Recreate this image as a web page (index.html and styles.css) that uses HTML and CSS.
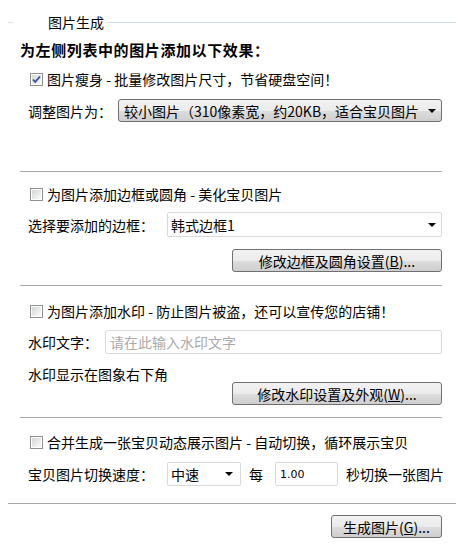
FILE: index.html
```html
<!DOCTYPE html>
<html lang="zh-CN">
<head>
<meta charset="utf-8">
<title>图片生成</title>
<link rel="stylesheet" href="styles.css">
</head>
<body>
<div class="panel">
  <div class="legend">
    <span class="lg-left"></span>
    <span class="lg-title">图片生成</span>
    <span class="lg-line"></span>
  </div>
  <div class="content">
    <div class="heading">为左侧列表中的图片添加以下效果：</div>

    <div class="check-row cr1">
      <span class="cb"><svg width="13" height="13" viewBox="0 0 13 13"><defs><linearGradient id="g1" x1="0" y1="0" x2="1" y2="1"><stop offset="0" stop-color="#d4d6d9"/><stop offset="1" stop-color="#fbfbfb"/></linearGradient></defs><rect x="0.5" y="0.5" width="12" height="12" fill="#fff" stroke="#8e8f8f"/><rect x="2" y="2" width="9" height="9" fill="url(#g1)"/><path d="M3 6.5 L5.2 9 L10 3.5" fill="none" stroke="#2c4c9c" stroke-width="1.8"/></svg></span>
      <span class="cb-text">图片瘦身 - 批量修改图片尺寸，节省硬盘空间！</span>
    </div>

    <div class="field-row fr-size">
      <span class="label lw-size">调整图片为：</span>
      <div class="select raised sel-size"><span class="sel-text">较小图片（310像素宽，约20KB，适合宝贝图片</span><span class="arrow"></span></div>
    </div>

    <div class="sep sep1"></div>

    <div class="check-row cr2">
      <span class="cb"><svg width="13" height="13" viewBox="0 0 13 13"><defs><linearGradient id="g2" x1="0" y1="0" x2="1" y2="1"><stop offset="0" stop-color="#d4d6d9"/><stop offset="1" stop-color="#fbfbfb"/></linearGradient></defs><rect x="0.5" y="0.5" width="12" height="12" fill="#fff" stroke="#8e8f8f"/><rect x="2" y="2" width="9" height="9" fill="url(#g2)"/></svg></span>
      <span class="cb-text">为图片添加边框或圆角 - 美化宝贝图片</span>
    </div>

    <div class="field-row fr-border">
      <span class="label lw-border">选择要添加的边框：</span>
      <div class="select flat sel-border"><span class="sel-text">韩式边框1</span><span class="arrow"></span></div>
    </div>

    <div class="btn-row br1">
      <div class="btn btn-wide">修改边框及圆角设置(<u>B</u>)...</div>
    </div>

    <div class="sep sep2"></div>

    <div class="check-row cr3">
      <span class="cb"><svg width="13" height="13" viewBox="0 0 13 13"><defs><linearGradient id="g3" x1="0" y1="0" x2="1" y2="1"><stop offset="0" stop-color="#d4d6d9"/><stop offset="1" stop-color="#fbfbfb"/></linearGradient></defs><rect x="0.5" y="0.5" width="12" height="12" fill="#fff" stroke="#8e8f8f"/><rect x="2" y="2" width="9" height="9" fill="url(#g3)"/></svg></span>
      <span class="cb-text">为图片添加水印 - 防止图片被盗，还可以宣传您的店铺！</span>
    </div>

    <div class="field-row fr-wm">
      <span class="label lw-wm">水印文字：</span>
      <div class="input input-wm"><span class="placeholder">请在此输入水印文字</span></div>
    </div>

    <div class="note">水印显示在图象右下角</div>

    <div class="btn-row br2">
      <div class="btn btn-wide">修改水印设置及外观(<u>W</u>)...</div>
    </div>

    <div class="sep sep3"></div>

    <div class="check-row cr4">
      <span class="cb"><svg width="13" height="13" viewBox="0 0 13 13"><defs><linearGradient id="g4" x1="0" y1="0" x2="1" y2="1"><stop offset="0" stop-color="#d4d6d9"/><stop offset="1" stop-color="#fbfbfb"/></linearGradient></defs><rect x="0.5" y="0.5" width="12" height="12" fill="#fff" stroke="#8e8f8f"/><rect x="2" y="2" width="9" height="9" fill="url(#g4)"/></svg></span>
      <span class="cb-text">合并生成一张宝贝动态展示图片 - 自动切换，循环展示宝贝</span>
    </div>

    <div class="field-row fr-speed">
      <span class="label lw-border">宝贝图片切换速度：</span>
      <div class="select flat sel-speed"><span class="sel-text">中速</span><span class="arrow"></span></div>
      <span class="every">每</span>
      <div class="input input-sec"><span class="value">1.00</span></div>
      <span class="after">秒切换一张图片</span>
    </div>
  </div>

  <div class="sep sep-full"></div>

  <div class="btn-row br3">
    <div class="btn btn-gen">生成图片(<u>G</u>)...</div>
  </div>
</div>
</body>
</html>
```

FILE: styles.css
```css
html, body {
  margin: 0;
  padding: 0;
  background: #ffffff;
}

body {
  font-family: "Noto Sans CJK SC", "Liberation Sans", sans-serif;
  font-size: 14px;
  color: #000;
}

.panel {
  width: 456px;
  height: 558px;
  overflow: hidden;
}

/* group title */
.legend {
  display: flex;
  align-items: center;
  height: 18px;
  margin-top: 13px;
  padding-left: 8px;
}
.lg-left {
  width: 6px;
  height: 1px;
  background: #dde4ea;
}
.lg-title {
  margin-left: 34px;
  line-height: 18px;
}
.lg-line {
  flex: 1;
  height: 1px;
  margin-left: 2px;
  margin-top: 1px;
  background: #d5dfe6;
}

.content {
  margin-left: 20px;
  width: 422px;
}

.heading {
  font-weight: bold;
  font-size: 15px;
  letter-spacing: 0.6px;
  line-height: 20px;
  margin-top: 9px;
}

.check-row {
  display: flex;
  align-items: center;
  height: 20px;
  margin-left: 10px;
}
.cb {
  width: 13px;
  height: 13px;
  display: flex;
}
.cb-text {
  margin-left: 4px;
  line-height: 20px;
  white-space: nowrap;
}
.cr1 { margin-top: 9px; }
.cr2 { margin-top: 12px; }
.cr3 { margin-top: 15px; }
.cr4 { margin-top: 14px; }

.field-row {
  display: flex;
  align-items: center;
  margin-left: 8px;
}
.label {
  white-space: nowrap;
  flex: none;
}
.lw-size { width: 90px; }
.lw-border { width: 139px; }
.lw-wm { width: 77px; }

.fr-size { margin-top: 10px; height: 23px; }
.fr-border { margin-top: 8px; height: 25px; }
.fr-wm { margin-top: 9px; height: 24px; }
.fr-speed { margin-top: 10px; height: 24px; }

.select {
  box-sizing: border-box;
  height: 100%;
  display: flex;
  align-items: center;
  justify-content: space-between;
  padding-left: 5px;
  padding-right: 5px;
}
.sel-size, .sel-border { flex: 1; }
.sel-speed { width: 74px; flex: none; padding-right: 7px; }

.raised {
  border: 1px solid #707070;
  border-radius: 3px;
  background: linear-gradient(#f2f2f2 0%, #ebebeb 50%, #dddddd 51%, #cfcfcf 100%);
}
.flat {
  border: 1px solid #d9d9d9;
  border-radius: 2px;
  background: #ffffff;
  padding-left: 3px;
}
.sel-text {
  white-space: nowrap;
  flex: 1;
  line-height: 20px;
}
.arrow {
  flex: none;
  width: 0;
  height: 0;
  border-left: 4px solid transparent;
  border-right: 4px solid transparent;
  border-top: 4px solid #000;
  margin-left: 4px;
}

.input {
  box-sizing: border-box;
  height: 100%;
  border: 1px solid #dadada;
  border-radius: 2px;
  background: #fff;
  display: flex;
  align-items: center;
  padding-left: 4px;
}
.input-wm { flex: 1; }
.placeholder {
  color: #a9a9a9;
  white-space: nowrap;
}
.input-sec {
  width: 63px;
  flex: none;
  margin-left: 12px;
}
.value {
  font-family: "DejaVu Sans", sans-serif;
  font-size: 11px;
}
.every {
  margin-left: 8px;
}
.after {
  margin-left: 8px;
  white-space: nowrap;
}

.note {
  margin-left: 8px;
  margin-top: 12px;
  height: 16px;
  line-height: 16px;
}

.btn-row {
  display: flex;
  justify-content: flex-end;
}
.br1 { margin-top: 12px; }
.br2 { margin-top: 0; }
.br3 { margin-top: 11px; padding-right: 14px; }

.btn {
  box-sizing: border-box;
  height: 23px;
  border: 1px solid #707070;
  border-radius: 3px;
  background: linear-gradient(#f2f2f2 0%, #ebebeb 50%, #dddddd 51%, #cfcfcf 100%);
  display: flex;
  align-items: center;
  justify-content: center;
  white-space: nowrap;
  line-height: 20px;
}
.btn u {
  text-underline-offset: 1px;
}
.btn-wide { width: 210px; }
.btn-gen { width: 111px; }

.sep {
  height: 1px;
  background: #a9a9a9;
}
.sep1 { margin-top: 49px; }
.sep2 { margin-top: 13px; }
.sep3 { margin-top: 12px; }
.sep-full {
  margin-top: 17px;
  margin-left: 8px;
}
```
